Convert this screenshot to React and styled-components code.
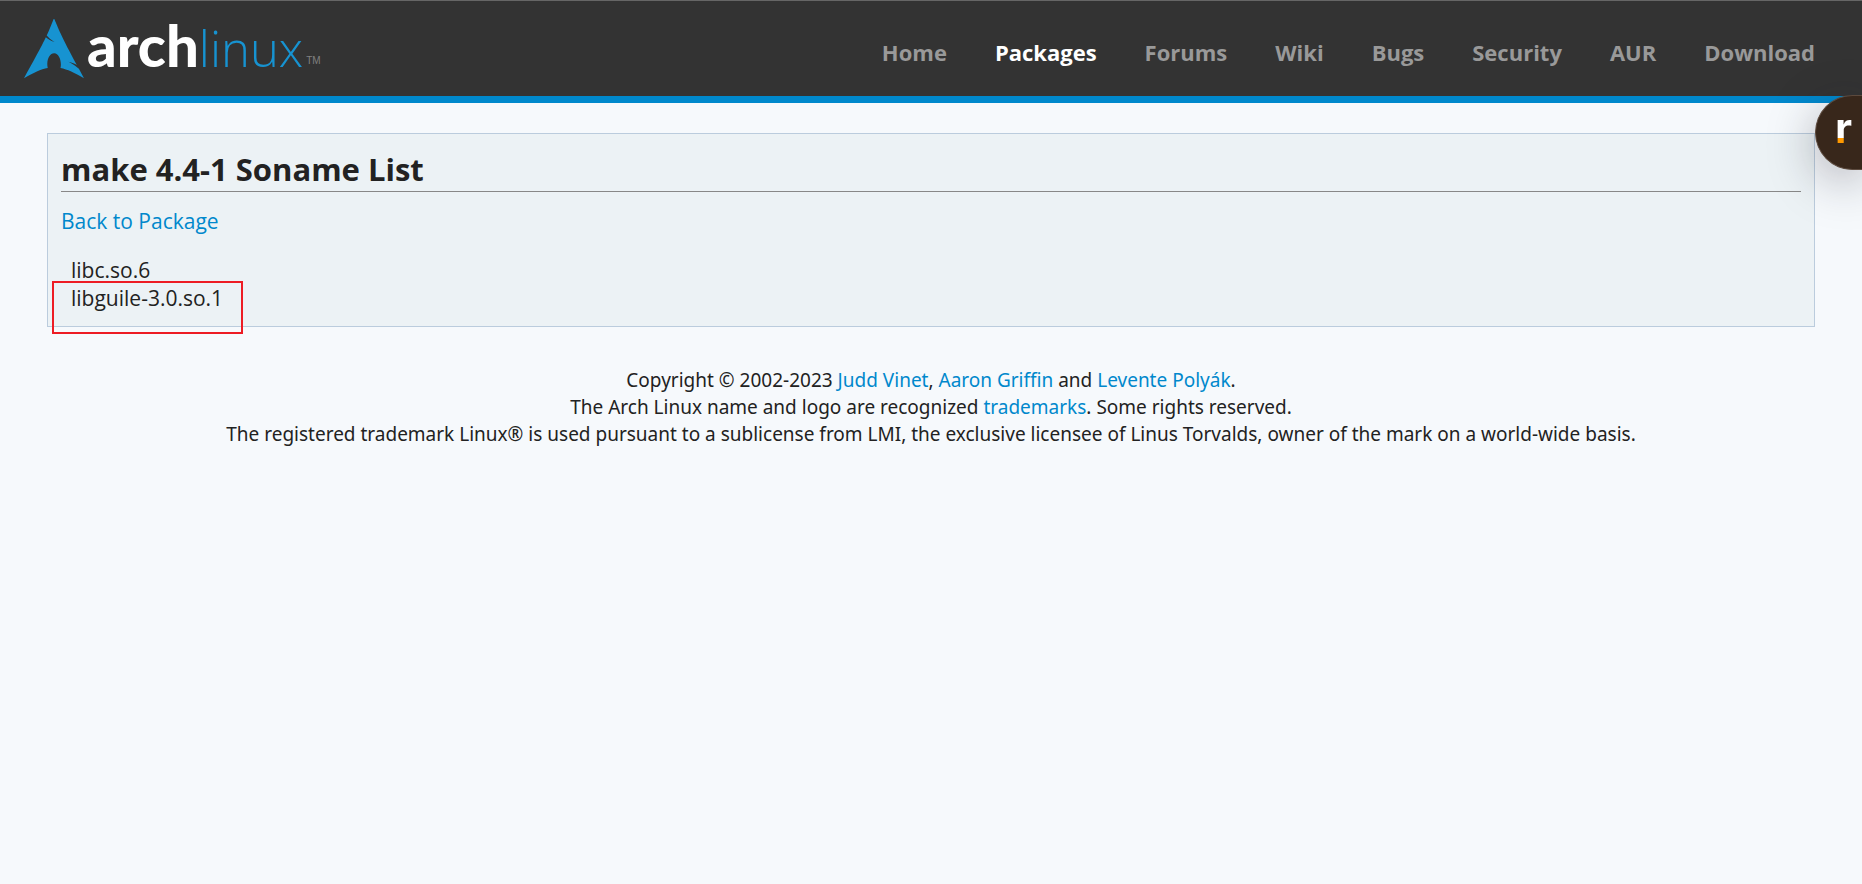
import React from "react";
import styled, { createGlobalStyle } from "styled-components";

const GlobalStyle = createGlobalStyle`
  * { box-sizing: border-box; }
  body {
    margin: 0;
    background: #f6f9fc;
    color: #222;
    font-family: "Open Sans", "Noto Sans", sans-serif;
    font-size: 21px;
    line-height: 28px;
  }
`;

const Header = styled.header`
  display: flex;
  align-items: center;
  justify-content: space-between;
  height: 103px;
  padding: 0 47px 0 24px;
  background: #333;
  border-top: 1px solid #666;
  border-bottom: 7px solid #08c;
`;

const Logo = styled.a`
  display: flex;
  align-items: center;
  gap: 3px;
  text-decoration: none;
`;

const LogoMark = styled.svg`
  width: 60px;
  height: 60px;
  fill: #1793d1;
`;

const Wordmark = styled.span`
  display: flex;
  align-items: baseline;
  height: 60px;
  font-family: Lato, sans-serif;
  font-size: 58px;
  line-height: 52px;
  font-weight: 900;
  color: #fff;
`;

const WordmarkThin = styled.span`
  font-family: "Open Sans", sans-serif;
  font-size: 49px;
  font-weight: 300;
  color: #1793d1;
`;

const Trademark = styled.span`
  align-self: flex-end;
  padding-bottom: 4px;
  font-family: "Liberation Sans", sans-serif;
  font-size: 10px;
  line-height: 28px;
  font-weight: 400;
  color: #808080;
`;

const Nav = styled.nav`
  padding-top: 8px;
`;

const NavList = styled.ul`
  display: flex;
  gap: 48px;
  margin: 0;
  padding: 0;
  list-style: none;
`;

const NavLink = styled.a`
  color: ${(p) => (p.$active ? "#fff" : "#999")};
  font-size: 22px;
  font-weight: 700;
  text-decoration: none;
`;

const Link = styled.a`
  color: #08c;
  text-decoration: none;
`;

const Main = styled.main`
  margin: 30px 47px 0;
`;

const Box = styled.section`
  padding: 19px 13px 14px;
  background: #ecf2f5;
  border: 1px solid #bcd;
`;

const Title = styled.h2`
  margin: 0;
  padding-bottom: 5px;
  border-bottom: 1px solid #888;
  font-size: 31px;
  line-height: 33px;
  font-weight: 700;
`;

const BackLine = styled.p`
  margin: 15px 0 21px;
`;

const SonameList = styled.ul`
  margin: 0;
  padding: 0 0 0 10px;
  list-style: none;
`;

const SonameItem = styled.li`
  position: relative;
`;

const Highlight = styled.span`
  position: absolute;
  top: -3px;
  left: -19px;
  width: 191px;
  height: 53px;
  border: 2px solid #ed1c24;
  pointer-events: none;
`;

const Footer = styled.footer`
  margin: 40px 47px 0;
  font-family: "Noto Sans", "Open Sans", sans-serif;
  font-size: 19px;
  line-height: 27px;
  text-align: center;

  p { margin: 0; }
`;

const Badge = styled.button`
  position: absolute;
  top: 95px;
  right: 0;
  width: 47px;
  height: 75px;
  padding: 0 0 9px 19px;
  border: 1px solid #5c4a3e;
  border-right: 0;
  border-radius: 38px 0 0 38px;
  background: #38271b;
  box-shadow: 0 12px 48px rgba(30, 30, 40, 0.35);
  text-align: left;
`;

const BadgeLetter = styled.span`
  display: block;
  font-family: Inter, sans-serif;
  font-size: 42px;
  line-height: 48px;
  font-weight: 700;
  color: transparent;
  background: linear-gradient(#fff 34px, #f90 34px);
  background-clip: text;
`;

const NAV = ["Home", "Packages", "Forums", "Wiki", "Bugs", "Security", "AUR", "Download"];

export default function App() {
  return (
    <>
      <GlobalStyle />
      <Header>
        <Logo href="#home" aria-label="Arch Linux">
          <LogoMark viewBox="0 0.9 22.8 22.8" aria-hidden="true">
            <path d="M11.39.605C10.376 3.092 9.764 4.72 8.635 7.132c.693.734 1.543 1.589 2.923 2.554-1.484-.61-2.496-1.224-3.252-1.86C6.86 10.842 4.596 15.138 0 23.395c3.612-2.085 6.412-3.37 9.021-3.862a6.61 6.61 0 01-.171-1.547l.003-.115c.058-2.315 1.261-4.095 2.687-3.973 1.426.12 2.534 2.096 2.478 4.409a6.52 6.52 0 01-.146 1.243c2.58.505 5.352 1.787 8.914 3.844-.702-1.293-1.33-2.459-1.929-3.57-.943-.73-1.926-1.682-3.933-2.713 1.38.359 2.367.772 3.137 1.234-6.09-11.334-6.582-12.84-8.67-17.74z" />
          </LogoMark>
          <Wordmark>
            arch<WordmarkThin>linux</WordmarkThin>
          </Wordmark>
          <Trademark>TM</Trademark>
        </Logo>
        <Nav>
          <NavList>
            {NAV.map((name) => (
              <li key={name}>
                <NavLink href={"#" + name.toLowerCase()} $active={name === "Packages"}>
                  {name}
                </NavLink>
              </li>
            ))}
          </NavList>
        </Nav>
      </Header>
      <Main>
        <Box>
          <Title>make 4.4-1 Soname List</Title>
          <BackLine>
            <Link href="#package">Back to Package</Link>
          </BackLine>
          <SonameList>
            <SonameItem>libc.so.6</SonameItem>
            <SonameItem>
              libguile-3.0.so.1
              <Highlight />
            </SonameItem>
          </SonameList>
        </Box>
      </Main>
      <Footer>
        <p>
          Copyright © 2002-2023 <Link href="#judd">Judd Vinet</Link>,{" "}
          <Link href="#aaron">Aaron Griffin</Link> and <Link href="#levente">Levente Polyák</Link>.
        </p>
        <p>
          The Arch Linux name and logo are recognized <Link href="#trademarks">trademarks</Link>. Some
          rights reserved.
        </p>
        <p>
          The registered trademark Linux® is used pursuant to a sublicense from LMI, the exclusive
          licensee of Linus Torvalds, owner of the mark on a world-wide basis.
        </p>
      </Footer>
      <Badge type="button" aria-label="Open panel">
        <BadgeLetter>r</BadgeLetter>
      </Badge>
    </>
  );
}
